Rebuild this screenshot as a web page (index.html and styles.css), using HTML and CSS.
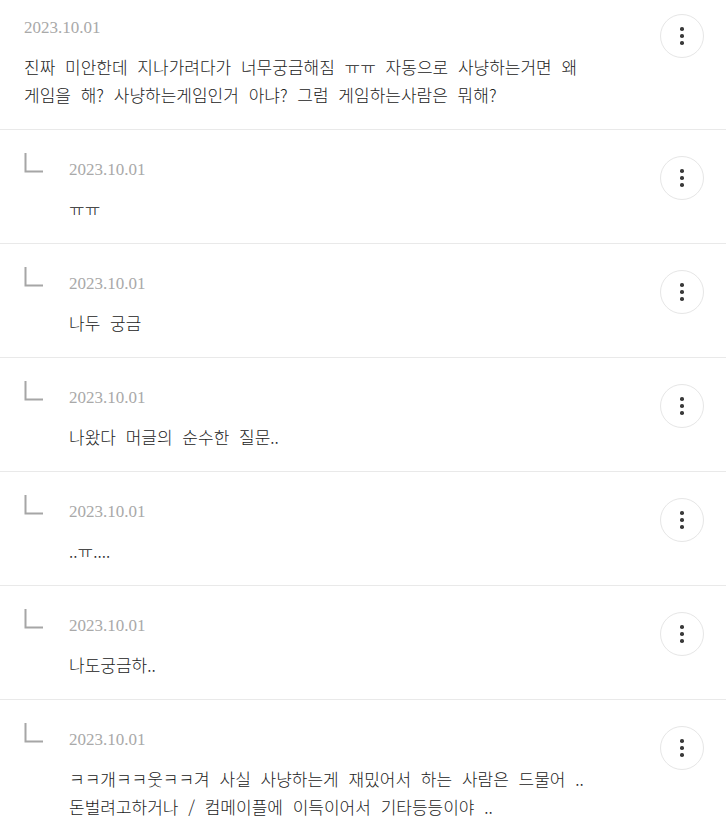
FILE: index.html
```html
<!DOCTYPE html>
<html lang="ko">
<head>
    <meta charset="UTF-8">
    <meta name="viewport" content="width=device-width, initial-scale=1.0">
    <title>Comments</title>
    <link rel="stylesheet" href="styles.css">
</head>
<body>

    <div class="comment top">
        <div class="main">
            <div class="content">
                <div class="date">2023.10.01</div>
                <p class="text">진짜 미안한데 지나가려다가 너무궁금해짐 ㅠㅠ 자동으로 사냥하는거면 왜<br>게임을 해? 사냥하는게임인거 아냐? 그럼 게임하는사람은 뭐해?</p>
            </div>
        </div>
        <button class="more-btn" aria-label="more"><span></span><span></span><span></span></button>
    </div>

    <div class="comment reply">
        <div class="main">
            <svg class="reply-icon" width="20" height="20" viewBox="0 0 20 20"><path d="M1.5 0 V18.5 H19" fill="none" stroke="#a6a6a6" stroke-width="2"/></svg>
            <div class="content">
                <div class="date">2023.10.01</div>
                <p class="text">ㅠㅠ</p>
            </div>
        </div>
        <button class="more-btn" aria-label="more"><span></span><span></span><span></span></button>
    </div>

    <div class="comment reply">
        <div class="main">
            <svg class="reply-icon" width="20" height="20" viewBox="0 0 20 20"><path d="M1.5 0 V18.5 H19" fill="none" stroke="#a6a6a6" stroke-width="2"/></svg>
            <div class="content">
                <div class="date">2023.10.01</div>
                <p class="text">나두 궁금</p>
            </div>
        </div>
        <button class="more-btn" aria-label="more"><span></span><span></span><span></span></button>
    </div>

    <div class="comment reply">
        <div class="main">
            <svg class="reply-icon" width="20" height="20" viewBox="0 0 20 20"><path d="M1.5 0 V18.5 H19" fill="none" stroke="#a6a6a6" stroke-width="2"/></svg>
            <div class="content">
                <div class="date">2023.10.01</div>
                <p class="text">나왔다 머글의 순수한 질문..</p>
            </div>
        </div>
        <button class="more-btn" aria-label="more"><span></span><span></span><span></span></button>
    </div>

    <div class="comment reply">
        <div class="main">
            <svg class="reply-icon" width="20" height="20" viewBox="0 0 20 20"><path d="M1.5 0 V18.5 H19" fill="none" stroke="#a6a6a6" stroke-width="2"/></svg>
            <div class="content">
                <div class="date">2023.10.01</div>
                <p class="text">..ㅠ....</p>
            </div>
        </div>
        <button class="more-btn" aria-label="more"><span></span><span></span><span></span></button>
    </div>

    <div class="comment reply">
        <div class="main">
            <svg class="reply-icon" width="20" height="20" viewBox="0 0 20 20"><path d="M1.5 0 V18.5 H19" fill="none" stroke="#a6a6a6" stroke-width="2"/></svg>
            <div class="content">
                <div class="date">2023.10.01</div>
                <p class="text">나도궁금하..</p>
            </div>
        </div>
        <button class="more-btn" aria-label="more"><span></span><span></span><span></span></button>
    </div>

    <div class="comment reply">
        <div class="main">
            <svg class="reply-icon" width="20" height="20" viewBox="0 0 20 20"><path d="M1.5 0 V18.5 H19" fill="none" stroke="#a6a6a6" stroke-width="2"/></svg>
            <div class="content">
                <div class="date">2023.10.01</div>
                <p class="text">ㅋㅋ개ㅋㅋ웃ㅋㅋ겨 사실 사냥하는게 재밌어서 하는 사람은 드물어 ..<br>돈벌려고하거나 / 컴메이플에 이득이어서 기타등등이야 ..</p>
            </div>
        </div>
        <button class="more-btn" aria-label="more"><span></span><span></span><span></span></button>
    </div>

</body>
</html>
```

FILE: styles.css
```css
body {
    margin: 0;
    background: #fff;
    color: #222;
    font-family: "Liberation Serif", "Noto Sans CJK KR", serif;
}
.comment {
    display: flex;
    align-items: flex-start;
    padding: 14px 24px 20px;
    border-bottom: 1px solid #e9e9e9;
}
.comment.reply {
    padding-top: 23px;
}
.main {
    flex: 1;
    display: flex;
    align-items: flex-start;
}
.reply-icon {
    flex: none;
    width: 20px;
    height: 20px;
    margin-right: 25px;
}
.content {
    flex: 1;
}
.date {
    margin-top: 4px;
    font-size: 17px;
    line-height: 20px;
    color: #a9a9a9;
}
.reply .date {
    margin-top: 7px;
}
.text {
    margin: 15px 0 0;
    font-family: "Noto Sans CJK KR", sans-serif;
    font-size: 17px;
    font-weight: 300;
    line-height: 28px;
    word-spacing: 5px;
    color: #222;
}
.more-btn {
    flex: none;
    width: 44px;
    height: 44px;
    margin-right: -2px;
    border: 1px solid #e6e6e6;
    border-radius: 50%;
    background: #fff;
    display: flex;
    flex-direction: column;
    align-items: center;
    justify-content: center;
    gap: 3.5px;
    padding: 0;
    cursor: pointer;
}
.reply .more-btn {
    margin-top: 3px;
}
.more-btn span {
    width: 3.5px;
    height: 3.5px;
    border-radius: 50%;
    background: #3a3a3a;
}
```
